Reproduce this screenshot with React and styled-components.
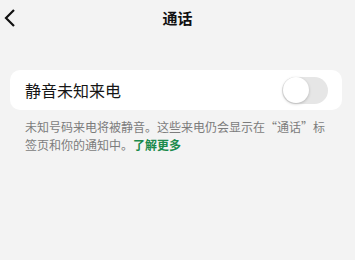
import React from "react";
import styled, { createGlobalStyle } from "styled-components";

const Global = createGlobalStyle`
  html, body { margin: 0; padding: 0; background: #f3f3f3; }
  body { font-family: "Noto Sans CJK SC", "Noto Sans", sans-serif; }
`;

const Page = styled.div`
  width: 355px;
  height: 260px;
  background: #f3f3f3;
  display: flex;
  flex-direction: column;
`;

const Header = styled.header`
  height: 35px;
  display: grid;
  grid-template-columns: 1fr auto 1fr;
  align-items: center;
`;

const Back = styled.button`
  justify-self: start;
  border: 0;
  background: none;
  padding: 0 0 0 3px;
  margin: 0;
  display: flex;
  align-items: center;
  height: 35px;
`;

const Title = styled.h1`
  margin: 0;
  font-size: 15px;
  font-weight: 700;
  color: #111;
  line-height: 35px;
`;

const Card = styled.div`
  margin: 35px 13px 0 10px;
  height: 40px;
  background: #fff;
  border-radius: 10px;
  display: flex;
  align-items: center;
  justify-content: space-between;
  padding: 0 14px 0 15px;
`;

const Label = styled.span`
  font-size: 16px;
  color: #161616;
`;

const Track = styled.div`
  width: 46px;
  height: 27px;
  border-radius: 14px;
  background: ${(p) => (p.$on ? "#07c160" : "#e6e6e6")};
  display: flex;
  align-items: center;
  padding: 0 1px;
  box-sizing: border-box;
`;

const Knob = styled.div`
  width: 26px;
  height: 26px;
  border-radius: 50%;
  background: #fff;
  box-shadow: 0 1px 3px rgba(0, 0, 0, 0.22);
`;

const Desc = styled.p`
  margin: 8px 26px 0 25px;
  font-size: 12px;
  line-height: 18px;
  color: #7c7c7c;
`;

const Link = styled.a`
  color: #1a8a4c;
  font-weight: 700;
  text-decoration: none;
`;

export default function App() {
  return (
    <>
      <Global />
      <Page>
        <Header>
          <Back aria-label="返回">
            <svg width="14" height="20" viewBox="0 0 14 20">
              <path d="M11 2 L3 10 L11 18" fill="none" stroke="#111" strokeWidth="2.2" />
            </svg>
          </Back>
          <Title>通话</Title>
          <span />
        </Header>
        <Card>
          <Label>静音未知来电</Label>
          <Track $on={false}>
            <Knob />
          </Track>
        </Card>
        <Desc>
          未知号码来电将被静音。这些来电仍会显示在“通话”标签页和你的通知中。<Link href="#">了解更多</Link>
        </Desc>
      </Page>
    </>
  );
}
